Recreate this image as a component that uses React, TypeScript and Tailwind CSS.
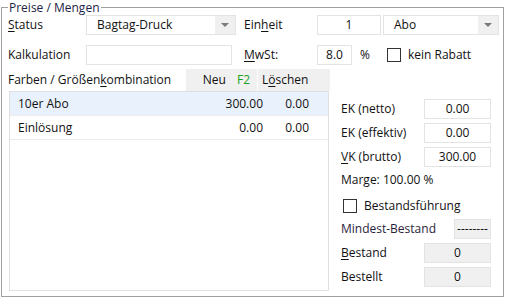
import { ReactNode } from "react";

const U = ({ children }: { children: ReactNode }) => <span className="underline underline-offset-2">{children}</span>;

const Combo = ({ value, w }: { value: string; w: string }) => (
  <div className={`flex h-[20px] ${w} border border-[#e3e3e3] bg-white`}>
    <div className="flex-1 pl-[10px] leading-[18px]">{value}</div>
    <div className="flex w-[20px] items-center justify-center bg-[#f0f0f0]">
      <svg width="8" height="4" viewBox="0 0 8 4">
        <path d="M0 0 L8 0 L4 4 Z" fill="#7a7a7a" />
      </svg>
    </div>
  </div>
);

const Field = ({ value, w, gray }: { value: string; w: string; gray?: boolean }) => (
  <div className={`h-[20px] ${w} border border-[#e3e3e3] text-center leading-[18px] ${gray ? "bg-[#f0f0f0]" : "bg-white"}`}>
    {value}
  </div>
);

const Check = () => <div className="h-[14px] w-[14px] border border-[#333] bg-white" />;

const rows = [
  { name: "10er Abo", a: "300.00", b: "0.00", sel: true },
  { name: "Einlösung", a: "0.00", b: "0.00", sel: false },
];

export default function App() {
  return (
    <div className="h-[299px] w-[506px] bg-white text-[12px] text-[#111] [font-family:'Open_Sans','Noto_Sans',sans-serif]">
      <fieldset className="ml-[1px] h-[297px] w-[503px] border border-[#a0a0a0] pl-[6px]">
        <legend className="px-[1px] leading-[15px] text-[#1e1e46]">Preise / Mengen</legend>

        <div className="flex items-center">
          <div className="w-[78px]"><U>S</U>tatus</div>
          <Combo value="Bagtag-Druck" w="w-[150px]" />
          <div className="ml-[8px] w-[73px]">Ein<U>h</U>eit</div>
          <Field value="1" w="w-[64px]" />
          <div className="ml-[2px]"><Combo value="Abo" w="w-[116px]" /></div>
        </div>

        <div className="mt-[10px] flex items-center">
          <div className="w-[78px]">Kalkulation</div>
          <div className="h-[20px] w-[146px] border border-[#e3e3e3] bg-white" />
          <div className="ml-[12px] w-[73px]"><U>M</U>wSt:</div>
          <Field value="8.0" w="w-[35px]" />
          <div className="ml-[8px]">%</div>
          <div className="ml-[17px]"><Check /></div>
          <div className="ml-[7px]">kein Rabatt</div>
        </div>

        <div className="mt-[4px] flex">
          <div className="flex w-[322px] flex-col">
            <div className="flex h-[22px] items-center">
              <div className="w-[178px]">Farben / Größen<U>k</U>ombination</div>
              <div className="flex h-full w-[71px] items-center justify-end bg-[#f0f0f0] pr-[7px]">
                Neu<span className="ml-[11px] text-[#1aa01a]">F2</span>
              </div>
              <div className="ml-[1px] flex h-full flex-1 items-center bg-[#f0f0f0] pl-[4px]">
                L<U>ö</U>schen
              </div>
            </div>
            <div className="ml-[1px] h-[200px] w-[320px] border border-[#e0e0e0] bg-white">
              {rows.map((r) => (
                <div
                  key={r.name}
                  className={`flex h-[24px] items-center border-b border-[#ececec] ${r.sel ? "bg-[#e9f2fc]" : "bg-white"}`}
                >
                  <div className="flex-1 pl-[8px]">{r.name}</div>
                  <div className="w-[60px] text-right">{r.a}</div>
                  <div className="w-[46px] text-right">{r.b}</div>
                  <div className="w-[19px]" />
                </div>
              ))}
            </div>
          </div>

          <div className="ml-[11px] flex w-[150px] flex-col pt-[30px]">
            <div className="flex items-center justify-between">
              <span>EK (netto)</span>
              <Field value="0.00" w="w-[67px]" />
            </div>
            <div className="mt-[4px] flex items-center justify-between">
              <span>EK (effektiv)</span>
              <Field value="0.00" w="w-[67px]" />
            </div>
            <div className="mt-[4px] flex items-center justify-between">
              <span><U>V</U>K (brutto)</span>
              <Field value="300.00" w="w-[67px]" />
            </div>
            <div className="mt-[5px] leading-[16px]">Marge: 100.00 %</div>
            <div className="mt-[9px] flex items-center">
              <div className="ml-[2px]"><Check /></div>
              <span className="ml-[7px]">Bestandsführung</span>
            </div>
            <div className="mt-[4px] flex items-center justify-between">
              <span className="text-[#2a1e3c]">Mindest-Bestand</span>
              <Field value="--------" w="w-[37px]" gray />
            </div>
            <div className="mt-[4px] flex items-center justify-between">
              <span><U>B</U>estand</span>
              <Field value="0" w="w-[67px]" gray />
            </div>
            <div className="mt-[4px] flex items-center justify-between">
              <span>Bestellt</span>
              <Field value="0" w="w-[67px]" gray />
            </div>
          </div>
        </div>
      </fieldset>
    </div>
  );
}
